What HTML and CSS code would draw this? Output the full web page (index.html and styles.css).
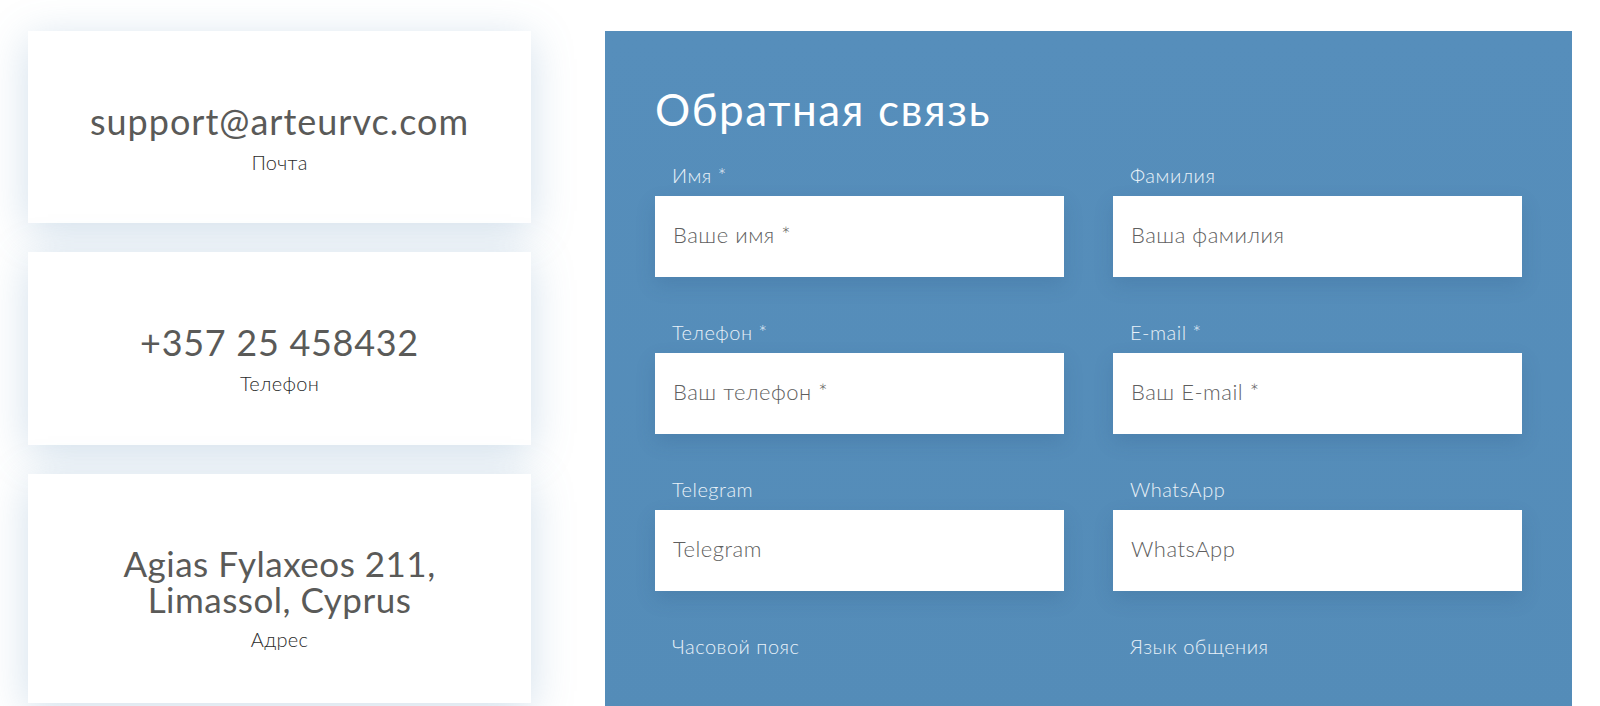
FILE: index.html
```html
<!DOCTYPE html>
<html lang="ru">
<head>
<meta charset="utf-8">
<title>Контакты</title>
<link rel="stylesheet" href="styles.css">
</head>
<body>
<div class="page">
  <div class="contacts">
    <div class="card card-mail">
      <div class="card-value">support@arteurvc.com</div>
      <div class="card-label">Почта</div>
    </div>
    <div class="card card-phone">
      <div class="card-value">+357 25 458432</div>
      <div class="card-label">Телефон</div>
    </div>
    <div class="card card-address">
      <div class="card-value">Agias Fylaxeos 211,<br>Limassol, Cyprus</div>
      <div class="card-label">Адрес</div>
    </div>
  </div>
  <div class="feedback">
    <h2 class="feedback-title">Обратная связь</h2>
    <div class="form-grid">
      <div class="field">
        <div class="field-label">Имя *</div>
        <div class="field-input">Ваше имя *</div>
      </div>
      <div class="field">
        <div class="field-label">Фамилия</div>
        <div class="field-input">Ваша фамилия</div>
      </div>
      <div class="field">
        <div class="field-label">Телефон *</div>
        <div class="field-input">Ваш телефон *</div>
      </div>
      <div class="field">
        <div class="field-label">E-mail *</div>
        <div class="field-input">Ваш E-mail *</div>
      </div>
      <div class="field">
        <div class="field-label">Telegram</div>
        <div class="field-input">Telegram</div>
      </div>
      <div class="field">
        <div class="field-label">WhatsApp</div>
        <div class="field-input">WhatsApp</div>
      </div>
      <div class="field">
        <div class="field-label">Часовой пояс</div>
      </div>
      <div class="field">
        <div class="field-label">Язык общения</div>
      </div>
    </div>
  </div>
</div>
</body>
</html>
```
FILE: styles.css
```css
html, body {
  margin: 0;
  padding: 0;
  background: #ffffff;
  overflow: hidden;
}
body {
  font-family: "Lato", "Noto Sans", sans-serif;
  width: 1600px;
  height: 706px;
}
.page {
  display: flex;
  align-items: flex-start;
  padding: 31px 0 0 28px;
}
.contacts {
  width: 503px;
  display: flex;
  flex-direction: column;
  gap: 29px;
  flex-shrink: 0;
}
.card {
  background: #ffffff;
  box-sizing: border-box;
  padding-top: 22px;
  display: flex;
  flex-direction: column;
  align-items: center;
  justify-content: center;
  text-align: center;
  box-shadow: 0 8px 40px rgba(90, 140, 182, 0.28);
}
.card-mail { height: 192px; }
.card-phone { height: 193px; }
.card-address { height: 229px; padding-top: 19px; }
.card-value {
  font-size: 36px;
  line-height: 37px;
  color: #5a5a58;
  letter-spacing: 0.7px;
}
.card-mail .card-value { letter-spacing: 1px; }
.card-address .card-value {
  font-size: 35px;
  line-height: 36px;
  letter-spacing: 0.5px;
}
.card-label {
  font-size: 20px;
  line-height: 24px;
  font-weight: 300;
  color: #2b2b2b;
  margin-top: 10px;
  letter-spacing: 0.3px;
}
.feedback {
  margin-left: 74px;
  width: 967px;
  height: 700px;
  flex-shrink: 0;
  box-sizing: border-box;
  padding: 52px 50px 0;
  background: linear-gradient(180deg, #568ebb 0%, #548cb8 100%);
}
.feedback-title {
  margin: 0 0 28px;
  font-size: 44px;
  line-height: 52px;
  font-weight: 400;
  color: #ffffff;
  letter-spacing: 1.6px;
}
.form-grid {
  display: grid;
  grid-template-columns: 409px 409px;
  column-gap: 49px;
  row-gap: 43px;
}
.field-label {
  padding-left: 17px;
  font-size: 20px;
  line-height: 24px;
  font-weight: 300;
  letter-spacing: 0.5px;
  color: #e8f1f8;
  margin-bottom: 9px;
}
.field-input {
  height: 81px;
  box-sizing: border-box;
  background: #ffffff;
  padding: 0 0 4px 18px;
  display: flex;
  align-items: center;
  font-size: 22px;
  font-weight: 300;
  letter-spacing: 0.5px;
  color: #5f5f5f;
  box-shadow: 0 8px 18px rgba(40, 80, 120, 0.18);
}
```
